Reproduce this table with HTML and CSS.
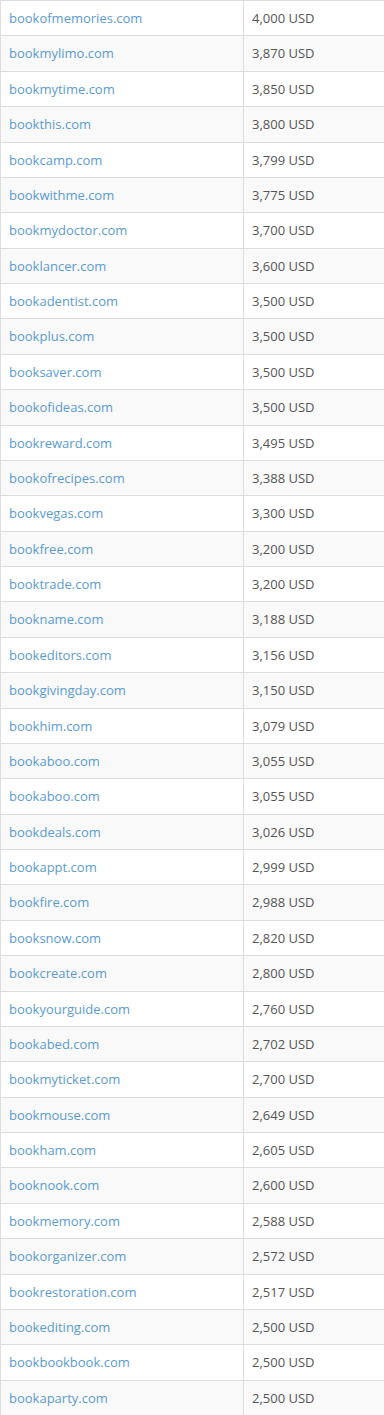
FILE: index.html
```html
<!DOCTYPE html>
<html>
<head>
<meta charset="utf-8">
<link rel="stylesheet" href="styles.css">
</head>
<body>
<table class="domains">
<tbody>
<tr><td class="name"><a href="#">bookofmemories.com</a></td><td class="price">4,000 USD</td></tr>
<tr><td class="name"><a href="#">bookmylimo.com</a></td><td class="price">3,870 USD</td></tr>
<tr><td class="name"><a href="#">bookmytime.com</a></td><td class="price">3,850 USD</td></tr>
<tr><td class="name"><a href="#">bookthis.com</a></td><td class="price">3,800 USD</td></tr>
<tr><td class="name"><a href="#">bookcamp.com</a></td><td class="price">3,799 USD</td></tr>
<tr><td class="name"><a href="#">bookwithme.com</a></td><td class="price">3,775 USD</td></tr>
<tr><td class="name"><a href="#">bookmydoctor.com</a></td><td class="price">3,700 USD</td></tr>
<tr><td class="name"><a href="#">booklancer.com</a></td><td class="price">3,600 USD</td></tr>
<tr><td class="name"><a href="#">bookadentist.com</a></td><td class="price">3,500 USD</td></tr>
<tr><td class="name"><a href="#">bookplus.com</a></td><td class="price">3,500 USD</td></tr>
<tr><td class="name"><a href="#">booksaver.com</a></td><td class="price">3,500 USD</td></tr>
<tr><td class="name"><a href="#">bookofideas.com</a></td><td class="price">3,500 USD</td></tr>
<tr><td class="name"><a href="#">bookreward.com</a></td><td class="price">3,495 USD</td></tr>
<tr><td class="name"><a href="#">bookofrecipes.com</a></td><td class="price">3,388 USD</td></tr>
<tr><td class="name"><a href="#">bookvegas.com</a></td><td class="price">3,300 USD</td></tr>
<tr><td class="name"><a href="#">bookfree.com</a></td><td class="price">3,200 USD</td></tr>
<tr><td class="name"><a href="#">booktrade.com</a></td><td class="price">3,200 USD</td></tr>
<tr><td class="name"><a href="#">bookname.com</a></td><td class="price">3,188 USD</td></tr>
<tr><td class="name"><a href="#">bookeditors.com</a></td><td class="price">3,156 USD</td></tr>
<tr><td class="name"><a href="#">bookgivingday.com</a></td><td class="price">3,150 USD</td></tr>
<tr><td class="name"><a href="#">bookhim.com</a></td><td class="price">3,079 USD</td></tr>
<tr><td class="name"><a href="#">bookaboo.com</a></td><td class="price">3,055 USD</td></tr>
<tr><td class="name"><a href="#">bookaboo.com</a></td><td class="price">3,055 USD</td></tr>
<tr><td class="name"><a href="#">bookdeals.com</a></td><td class="price">3,026 USD</td></tr>
<tr><td class="name"><a href="#">bookappt.com</a></td><td class="price">2,999 USD</td></tr>
<tr><td class="name"><a href="#">bookfire.com</a></td><td class="price">2,988 USD</td></tr>
<tr><td class="name"><a href="#">booksnow.com</a></td><td class="price">2,820 USD</td></tr>
<tr><td class="name"><a href="#">bookcreate.com</a></td><td class="price">2,800 USD</td></tr>
<tr><td class="name"><a href="#">bookyourguide.com</a></td><td class="price">2,760 USD</td></tr>
<tr><td class="name"><a href="#">bookabed.com</a></td><td class="price">2,702 USD</td></tr>
<tr><td class="name"><a href="#">bookmyticket.com</a></td><td class="price">2,700 USD</td></tr>
<tr><td class="name"><a href="#">bookmouse.com</a></td><td class="price">2,649 USD</td></tr>
<tr><td class="name"><a href="#">bookham.com</a></td><td class="price">2,605 USD</td></tr>
<tr><td class="name"><a href="#">booknook.com</a></td><td class="price">2,600 USD</td></tr>
<tr><td class="name"><a href="#">bookmemory.com</a></td><td class="price">2,588 USD</td></tr>
<tr><td class="name"><a href="#">bookorganizer.com</a></td><td class="price">2,572 USD</td></tr>
<tr><td class="name"><a href="#">bookrestoration.com</a></td><td class="price">2,517 USD</td></tr>
<tr><td class="name"><a href="#">bookediting.com</a></td><td class="price">2,500 USD</td></tr>
<tr><td class="name"><a href="#">bookbookbook.com</a></td><td class="price">2,500 USD</td></tr>
<tr><td class="name"><a href="#">bookaparty.com</a></td><td class="price">2,500 USD</td></tr>
</tbody>
</table>
</body>
</html>
```

FILE: styles.css
```css
html, body {
  margin: 0;
  padding: 0;
  background: #ffffff;
  overflow: hidden;
}

.domains {
  border-collapse: collapse;
  width: 385px;
  table-layout: fixed;
  font-family: "Open Sans", "Liberation Sans", sans-serif;
  font-size: 13px;
  color: #555555;
  border-left: 1px solid #dddddd;
}

.domains tr:nth-child(even) td {
  background: #f9f9f9;
}

.domains td {
  padding: 8px 8px;
  line-height: 18.38px;
  border-top: 1px solid #dddddd;
  border-bottom: 1px solid #dddddd;
  border-right: 1px solid #dddddd;
  vertical-align: top;
  white-space: nowrap;
}

.domains td.name {
  width: 226px;
}

.domains a {
  color: #5a9bd0;
  text-decoration: none;
}
```
